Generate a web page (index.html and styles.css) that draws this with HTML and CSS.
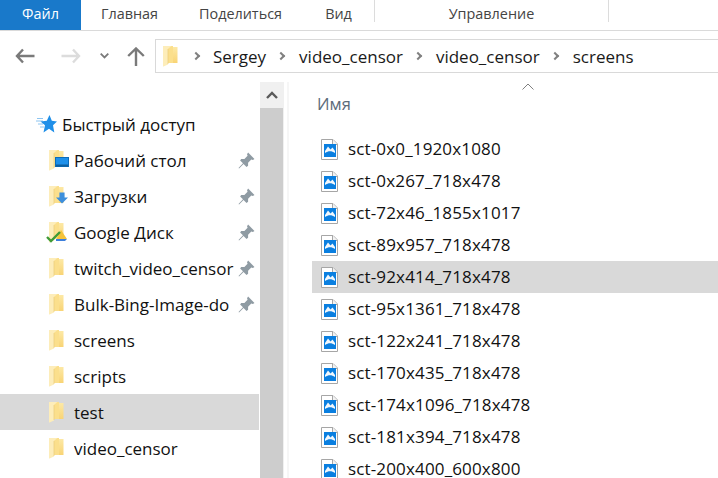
FILE: index.html
```html
<!DOCTYPE html>
<html lang="ru">
<head>
<meta charset="utf-8">
<title>screens</title>
<link rel="stylesheet" href="styles.css">
</head>
<body>
<svg class="defs" width="0" height="0">
  <defs>
    <linearGradient id="fold" x1="0" y1="0" x2="0" y2="1">
      <stop offset="0" stop-color="#fdeaa8"/>
      <stop offset="1" stop-color="#f8d06c"/>
    </linearGradient>
  </defs>
  <symbol id="folder" viewBox="0 0 15 22">
    <path d="M0 1H10V2H14.5V18H5L0.5 21Z" fill="url(#fold)"/>
    <path d="M0 1H8.5L5 4V19.5L0.5 21.5H0Z" fill="#fdedba"/>
    <path d="M5 4L8.5 1H10V18H5Z" fill="#fbdf8c"/>
    <path d="M5 4V19" stroke="#eacb78" stroke-width="0.7"/>
  </symbol>
  <symbol id="pin" viewBox="0 0 16 16">
    <path d="M9.5 0.5L15.5 6.5L14 7.5L12.5 7L9.5 10L9.5 13L8 14L5.2 11.2L1 15.5L0.5 15L4.7 10.7L2 8L3 6.5L6 6.5L9 3.5L8.5 2Z" fill="#8f9ba3"/>
  </symbol>
  <symbol id="img" viewBox="0 0 17 21">
    <path d="M0.5 0.5H12L16.5 5V20.5H0.5Z" fill="#fff" stroke="#a6a6a6"/>
    <path d="M11.5 0.5V5.5H16.5" fill="#f2f2f2" stroke="#a6a6a6"/>
    <rect x="3" y="5" width="12" height="13" fill="#0a7fe0"/>
    <path d="M4 12L7 7.5L9.5 10.5L11.5 8.5L14 12V14C10.5 11.5 7.5 11.5 4 14Z" fill="#f2f8fd"/>
  </symbol>
</svg>
<div class="app">
  <header class="ribbon">
    <div class="tab tab-file">Файл</div>
    <div class="tab tab-home">Главная</div>
    <div class="tab tab-share">Поделиться</div>
    <div class="tab tab-view">Вид</div>
    <div class="tab tab-manage">Управление</div>
  </header>
  <div class="toolbar">
    <div class="nav-buttons">
      <svg class="nav-icon back" width="20" height="16" viewBox="0 0 20 16"><path d="M8 1.5L2 8L8 14.5M2 8H19.5" fill="none" stroke="#7a7a7a" stroke-width="2.4"/></svg>
      <svg class="nav-icon forward" width="20" height="16" viewBox="0 0 20 16"><path d="M12 1.5L18 8L12 14.5M18 8H0.5" fill="none" stroke="#dcdcdc" stroke-width="2.4"/></svg>
      <svg class="nav-icon recent" width="9" height="6" viewBox="0 0 9 6"><path d="M0.7 0.7L4.5 4.5L8.3 0.7" fill="none" stroke="#7a7a7a" stroke-width="1.8"/></svg>
      <svg class="nav-icon up" width="18" height="19" viewBox="0 0 18 19"><path d="M1.2 9L9 1.5L16.8 9M9 2V19" fill="none" stroke="#7a7a7a" stroke-width="2.4"/></svg>
    </div>
    <div class="address">
      <svg class="addr-folder" width="15" height="22"><use href="#folder"/></svg>
      <span class="chev first"></span><span class="crumb">Sergey</span>
      <span class="chev"></span><span class="crumb">video_censor</span>
      <span class="chev"></span><span class="crumb">video_censor</span>
      <span class="chev"></span><span class="crumb">screens</span>
    </div>
  </div>
  <main class="main">
    <nav class="sidebar">
      <div class="quick">
        <svg class="star" width="21" height="18" viewBox="0 0 21 18">
          <path d="M0 6H7M2 9H7M4 12H8M1 3.5H7" stroke="#8cc4f0" stroke-width="1"/>
          <path d="M13.5 0L15.8 5.8L21 6.4L17 10.3L18.3 17.5L13 13.7L7.5 17.5L9 10.3L4.5 6.4L10.8 5.8Z" fill="#1f8fe8"/>
        </svg>
        <span>Быстрый доступ</span>
      </div>
      <div class="nav-item pinned">
        <span class="ico"><svg width="15" height="22"><use href="#folder"/></svg>
          <svg class="badge desktop" width="14" height="10" viewBox="0 0 14 10"><rect x="0.5" y="0.5" width="13" height="9" fill="#1e90ea" stroke="#0d6cb8"/><rect x="1" y="7.5" width="12" height="2" fill="#0d5f9f"/></svg></span>
        <span class="label">Рабочий стол</span>
        <svg class="pin" width="17" height="17"><use href="#pin"/></svg>
      </div>
      <div class="nav-item pinned">
        <span class="ico"><svg width="15" height="22"><use href="#folder"/></svg>
          <svg class="badge download" width="12" height="12" viewBox="0 0 14 13"><path d="M4 0H10V6H14L7 13L0 6H4Z" fill="#3d8fdc"/></svg></span>
        <span class="label">Загрузки</span>
        <svg class="pin" width="17" height="17"><use href="#pin"/></svg>
      </div>
      <div class="nav-item pinned">
        <span class="ico"><svg width="15" height="22"><use href="#folder"/></svg>
          <svg class="badge gdrive" width="22" height="15" viewBox="0 0 22 15"><path d="M11 9L15 1L21 10H11Z" fill="#f5c33b"/><path d="M10 10H21L19 12H10Z" fill="#3d7fdc"/><path d="M1 8L5 12L14 3" fill="none" stroke="#3f9b37" stroke-width="2.4"/></svg></span>
        <span class="label">Google Диск</span>
        <svg class="pin" width="17" height="17"><use href="#pin"/></svg>
      </div>
      <div class="nav-item pinned">
        <span class="ico"><svg width="15" height="22"><use href="#folder"/></svg></span>
        <span class="label">twitch_video_censor</span>
        <svg class="pin" width="17" height="17"><use href="#pin"/></svg>
      </div>
      <div class="nav-item pinned">
        <span class="ico"><svg width="15" height="22"><use href="#folder"/></svg></span>
        <span class="label">Bulk-Bing-Image-do</span>
        <svg class="pin" width="17" height="17"><use href="#pin"/></svg>
      </div>
      <div class="nav-item">
        <span class="ico"><svg width="15" height="22"><use href="#folder"/></svg></span>
        <span class="label">screens</span>
      </div>
      <div class="nav-item">
        <span class="ico"><svg width="15" height="22"><use href="#folder"/></svg></span>
        <span class="label">scripts</span>
      </div>
      <div class="nav-item selected">
        <span class="ico"><svg width="15" height="22"><use href="#folder"/></svg></span>
        <span class="label">test</span>
      </div>
      <div class="nav-item">
        <span class="ico"><svg width="15" height="22"><use href="#folder"/></svg></span>
        <span class="label">video_censor</span>
      </div>
    </nav>
    <div class="scrollbar">
      <div class="scroll-up"><svg width="12" height="8" viewBox="0 0 12 8"><path d="M1 7L6 2L11 7" fill="none" stroke="#5a5a5a" stroke-width="2.4"/></svg></div>
      <div class="scroll-thumb"></div>
    </div>
    <section class="content">
      <div class="sort-wrap"><svg width="12" height="7" viewBox="0 0 12 7"><path d="M0.5 6.5L6 1L11.5 6.5" fill="none" stroke="#7f7f7f"/></svg></div>
      <div class="col-head">Имя</div>
      <div class="files">
        <div class="file"><svg width="17" height="21"><use href="#img"/></svg><span>sct-0x0_1920x1080</span></div>
        <div class="file"><svg width="17" height="21"><use href="#img"/></svg><span>sct-0x267_718x478</span></div>
        <div class="file"><svg width="17" height="21"><use href="#img"/></svg><span>sct-72x46_1855x1017</span></div>
        <div class="file"><svg width="17" height="21"><use href="#img"/></svg><span>sct-89x957_718x478</span></div>
        <div class="file selected"><svg width="17" height="21"><use href="#img"/></svg><span>sct-92x414_718x478</span></div>
        <div class="file"><svg width="17" height="21"><use href="#img"/></svg><span>sct-95x1361_718x478</span></div>
        <div class="file"><svg width="17" height="21"><use href="#img"/></svg><span>sct-122x241_718x478</span></div>
        <div class="file"><svg width="17" height="21"><use href="#img"/></svg><span>sct-170x435_718x478</span></div>
        <div class="file"><svg width="17" height="21"><use href="#img"/></svg><span>sct-174x1096_718x478</span></div>
        <div class="file"><svg width="17" height="21"><use href="#img"/></svg><span>sct-181x394_718x478</span></div>
        <div class="file"><svg width="17" height="21"><use href="#img"/></svg><span>sct-200x400_600x800</span></div>
      </div>
    </section>
  </main>
</div>
</body>
</html>
```
FILE: styles.css
```css
* { box-sizing: border-box; }
html, body { margin: 0; padding: 0; height: 478px; overflow: hidden; background: #fff; }
body { font-family: "Open Sans", "Noto Sans", sans-serif; color: #111; font-size: 17px; }
.defs { position: absolute; }
.app { display: flex; flex-direction: column; width: 718px; height: 478px; overflow: hidden; }

.ribbon { display: flex; height: 31px; flex: none; border-bottom: 1px solid #dadada; font-size: 14.4px; color: #444; }
.tab { height: 30px; line-height: 28px; text-align: center; flex: none; }
.tab-file { width: 81px; background: #1979ca; color: #fff; }
.tab-home { width: 97px; }
.tab-share { width: 125px; }
.tab-view { width: 71px; }
.tab-manage { width: 235px; height: 22px; border-left: 1px solid #dcdcdc; border-right: 1px solid #dcdcdc; }

.toolbar { display: flex; align-items: flex-start; height: 42px; flex: none; padding-top: 8px; }
.nav-buttons { display: flex; align-items: center; width: 155px; height: 34px; flex: none; padding-left: 15px; }
.nav-icon { flex: none; display: block; }
.forward { margin-left: 26px; }
.recent { margin-left: 19px; }
.up { margin-left: 18px; }
.address { display: flex; align-items: center; flex: 1; height: 34px; border: 1px solid #d9d9d9; border-right: 0; padding-left: 7px; font-size: 17px; color: #1a1a1a; }
.addr-folder { flex: none; }
.chev { width: 6px; height: 6px; border-top: 2px solid #808080; border-right: 2px solid #808080; transform: rotate(45deg); margin: 0 15px 0 12px; flex: none; }
.chev.first { margin: 0 14px 0 15px; }
.crumb { white-space: nowrap; }

.main { display: flex; flex: 1; min-height: 0; overflow: hidden; }
.sidebar { width: 260px; flex: none; padding-top: 33px; }
.quick { display: flex; align-items: center; height: 36px; padding-left: 36px; gap: 5px; }
.nav-item { display: flex; align-items: center; height: 36px; padding-left: 49px; width: 259px; }
.nav-item.selected { background: #d9d9d9; }
.ico { position: relative; display: block; width: 25px; height: 22px; flex: none; }
.ico svg { display: block; }
.ico .badge { position: absolute; }
.ico .desktop { left: 6px; top: 8px; }
.ico .download { left: 7px; top: 7px; }
.ico .gdrive { left: -3px; top: 8px; }
.label { flex: 1; white-space: nowrap; overflow: hidden; min-width: 0; }
.pin { flex: none; margin: 0 4px 0 4px; }

.scrollbar { width: 24px; flex: none; display: flex; flex-direction: column; margin-top: 9px; background: #f0f0f0; }
.scroll-up { height: 26px; display: flex; align-items: center; justify-content: center; flex: none; }
.scroll-thumb { flex: 1; background: #cdcdcd; margin-right: 1px; }

.content { flex: 1; min-width: 0; overflow: hidden; border-left: 2px solid #f6f6f6; margin: 9px 0 0 3px; position: relative; padding-left: 23px; }
.sort-wrap { position: absolute; left: 233px; top: 1px; height: 7px; line-height: 0; }
.col-head { height: 51px; padding: 10px 0 0 5px; font-size: 16.5px; color: #5c6b7a; }
.files { display: flex; flex-direction: column; }
.file { display: flex; align-items: center; height: 32px; flex: none; padding-left: 9px; gap: 10px; letter-spacing: 0.15px; white-space: nowrap; }
.file span { margin-top: -2px; }
.file.selected { background: #d9d9d9; }
.file svg { flex: none; display: block; }
```
